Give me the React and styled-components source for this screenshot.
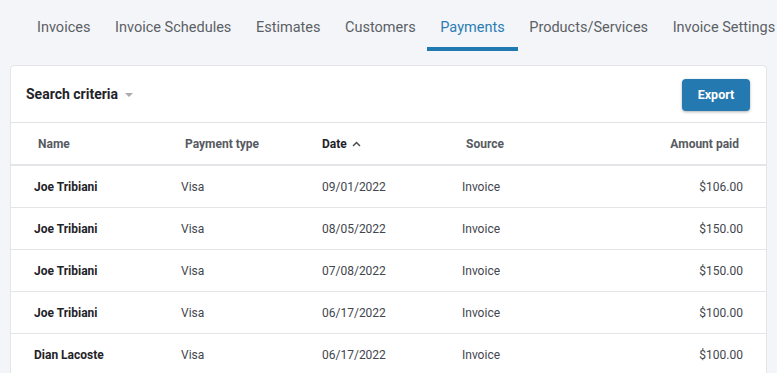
import React from 'react';
import styled, { createGlobalStyle } from 'styled-components';

const Global = createGlobalStyle`
  body {
    margin: 0;
    background: #f4f5f8;
    font-family: Roboto, "Liberation Sans", Arial, sans-serif;
  }
`;

const Page = styled.div`
  width: 777px;
  height: 373px;
  overflow: hidden;
`;

const Tabs = styled.nav`
  display: flex;
  padding-left: 24px;
  white-space: nowrap;
`;

const Tab = styled.div`
  display: flex;
  align-items: center;
  height: 40px;
  padding: 7px 13px 0;
  margin-right: -1.4px;
  font-size: 14.5px;
  color: ${p => (p.active ? '#2a7db4' : '#5b5f66')};
  border-bottom: 4px solid ${p => (p.active ? '#2079b0' : 'transparent')};
`;

const Card = styled.section`
  margin: 14px 10px 0;
  background: #fff;
  border: 1px solid #e3e5e8;
  border-radius: 4px;
`;

const CardHeader = styled.div`
  display: flex;
  align-items: center;
  justify-content: space-between;
  height: 56px;
  padding: 0 16px 0 15px;
  border-bottom: 1px solid #e1e3e6;
`;

const Criteria = styled.div`
  display: flex;
  align-items: center;
  gap: 7px;
  font-size: 14px;
  font-weight: 700;
  color: #1f2329;
`;

const Caret = styled.span`
  width: 0;
  height: 0;
  border-left: 4px solid transparent;
  border-right: 4px solid transparent;
  border-top: 4px solid #a8abb0;
  margin-top: 1px;
`;

const ExportButton = styled.button`
  width: 68px;
  height: 32px;
  border: none;
  border-radius: 4px;
  background: #2479b0;
  color: #fff;
  font-family: inherit;
  font-size: 12.5px;
  font-weight: 700;
  box-shadow: 0 1px 3px rgba(0, 0, 0, 0.3);
  margin-top: 1px;
`;

const Row = styled.div`
  display: grid;
  grid-template-columns: 147px 141px 140px 1fr 1fr;
  align-items: center;
  height: 41px;
  padding: 0 23px;
  font-size: 12px;
  border-bottom: ${p => (p.head ? '2px solid #e4e5e8' : '1px solid #e4e5e8')};
`;

const HeadCell = styled.div`
  display: flex;
  align-items: center;
  gap: 5px;
  font-weight: 700;
  color: ${p => (p.sorted ? '#1f2329' : '#565a61')};
  padding: 0 4px;
  padding-left: ${p => (p.flush ? '0' : '4px')};
  justify-content: ${p => (p.right ? 'flex-end' : 'flex-start')};
`;

const Cell = styled.div`
  color: ${p => (p.strong ? '#1f2329' : '#42464d')};
  font-weight: ${p => (p.strong ? 700 : 400)};
  text-align: ${p => (p.right ? 'right' : 'left')};
`;

const Chevron = () => (
  <svg width="9" height="6" viewBox="0 0 9 6">
    <path d="M1 5 L4.5 1.5 L8 5" fill="none" stroke="#4a4e55" strokeWidth="1.5" />
  </svg>
);

const tabs = ['Invoices', 'Invoice Schedules', 'Estimates', 'Customers', 'Payments', 'Products/Services', 'Invoice Settings'];

const payments = [
  { name: 'Joe Tribiani', type: 'Visa', date: '09/01/2022', source: 'Invoice', amount: '$106.00' },
  { name: 'Joe Tribiani', type: 'Visa', date: '08/05/2022', source: 'Invoice', amount: '$150.00' },
  { name: 'Joe Tribiani', type: 'Visa', date: '07/08/2022', source: 'Invoice', amount: '$150.00' },
  { name: 'Joe Tribiani', type: 'Visa', date: '06/17/2022', source: 'Invoice', amount: '$100.00' },
  { name: 'Dian Lacoste', type: 'Visa', date: '06/17/2022', source: 'Invoice', amount: '$100.00' },
];

const App = () => (
  <Page>
    <Global />
    <Tabs>
      {tabs.map(t => (
        <Tab key={t} active={t === 'Payments'}>{t}</Tab>
      ))}
    </Tabs>
    <Card>
      <CardHeader>
        <Criteria>
          Search criteria
          <Caret />
        </Criteria>
        <ExportButton>Export</ExportButton>
      </CardHeader>
      <Row head>
        <HeadCell>Name</HeadCell>
        <HeadCell>Payment type</HeadCell>
        <HeadCell sorted flush>Date <Chevron /></HeadCell>
        <HeadCell>Source</HeadCell>
        <HeadCell right>Amount paid</HeadCell>
      </Row>
      {payments.map((p, i) => (
        <Row key={i}>
          <Cell strong>{p.name}</Cell>
          <Cell>{p.type}</Cell>
          <Cell>{p.date}</Cell>
          <Cell>{p.source}</Cell>
          <Cell right>{p.amount}</Cell>
        </Row>
      ))}
    </Card>
  </Page>
);

export default App;
